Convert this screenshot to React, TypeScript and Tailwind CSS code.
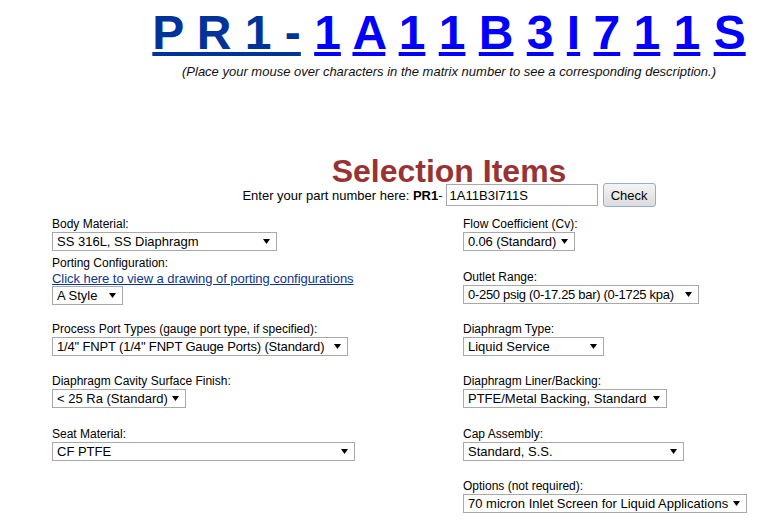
const FONT = { fontFamily: '"Liberation Sans", Arial, sans-serif' };

const matrix = ["1", "A", "1", "1", "B", "3", "I", "7", "1", "1", "S"];

function Arrow() {
  return (
    <svg width="7" height="5" viewBox="0 0 7 5" className="ml-[4px] shrink-0">
      <polygon points="0,0 7,0 3.5,5" fill="#000" />
    </svg>
  );
}

function FakeSelect({ value, width, tight = "" }: { value: string; width: string; tight?: string }) {
  return (
    <div
      className={`flex h-[19px] items-center justify-between border border-[#a9a9a9] bg-white pl-[4px] pr-[6px] text-[13px] leading-[15px] text-black ${width}`}
    >
      <span className={`whitespace-nowrap ${tight}`}>{value}</span>
      <Arrow />
    </div>
  );
}

function Label({ text, className = "" }: { text: string; className?: string }) {
  return <div className={`text-[12px] leading-[15px] text-black ${className}`}>{text}</div>;
}

export default function App() {
  return (
    <div className="h-[521px] w-full overflow-hidden bg-white text-black" style={FONT}>
      {/* header + title, centred on x=449 */}
      <div className="pl-[139px] text-center">
        <div className="whitespace-nowrap pt-[5px] text-[48px] font-bold leading-[55px]">
          <a className="text-[#003399] underline">P R 1 -</a>
          {matrix.map((c, i) => (
            <span key={i}>
              {" "}
              <a className="text-[#0000ff] underline">{c}</a>
            </span>
          ))}
        </div>
        <div className="mt-[4px] whitespace-nowrap text-[13px] italic leading-[15px] text-[#111]">
          (Place your mouse over characters in the matrix number to see a corresponding description.)
        </div>
        <div className="mt-[82px] text-[32px] font-bold leading-[21px] text-[#993333]">
          Selection Items
        </div>
        <div className="mt-[1px] flex h-[24px] items-center justify-center whitespace-nowrap text-[13px] leading-[15px]">
          <span>Enter your part number here:&nbsp;</span>
          <b>PR1</b>
          <span>-</span>
          <input
            readOnly
            value="1A11B3I711S"
            className="ml-[3px] h-[22px] w-[152px] border border-[#a9a9a9] bg-white px-[3px] text-[13px] text-black outline-none"
            style={FONT}
          />
          <button
            className="ml-[5px] h-[24px] w-[53px] rounded-[3px] border border-[#8fb0d8] bg-gradient-to-b from-[#f4f4f4] to-[#dcdcdc] text-[13px] text-black"
            style={FONT}
          >
            Check
          </button>
        </div>
      </div>

      {/* form columns */}
      <div className="mt-[10px] flex pl-[52px]">
        <div className="flex w-[411px] flex-col items-start">
          <Label text="Body Material:" />
          <FakeSelect value="SS 316L, SS Diaphragm" width="w-[225px]" />
          <Label text="Porting Configuration:" className="mt-[5px]" />
          <a className="text-[13px] leading-[15px] tracking-[-0.05px] text-[#0d3590] underline">
            Click here to view a drawing of porting configurations
          </a>
          <FakeSelect value="A Style" width="w-[71px]" />
          <Label text="Process Port Types (gauge port type, if specified):" className="mt-[17px]" />
          <FakeSelect
            value={'1/4" FNPT (1/4" FNPT Gauge Ports) (Standard)'}
            width="w-[296px]"
            tight="tracking-[-0.15px]"
          />
          <Label text="Diaphragm Cavity Surface Finish:" className="mt-[18px]" />
          <FakeSelect value="< 25 Ra (Standard)" width="w-[134px]" />
          <Label text="Seat Material:" className="mt-[19px]" />
          <FakeSelect value="CF PTFE" width="w-[303px]" />
        </div>

        <div className="flex flex-col items-start">
          <Label text="Flow Coefficient (Cv):" />
          <FakeSelect value="0.06 (Standard)" width="w-[112px]" tight="tracking-[-0.15px]" />
          <Label text="Outlet Range:" className="mt-[19px]" />
          <FakeSelect
            value="0-250 psig (0-17.25 bar) (0-1725 kpa)"
            width="w-[236px]"
            tight="tracking-[-0.3px]"
          />
          <Label text="Diaphragm Type:" className="mt-[18px]" />
          <FakeSelect value="Liquid Service" width="w-[141px]" />
          <Label text="Diaphragm Liner/Backing:" className="mt-[18px]" />
          <FakeSelect value="PTFE/Metal Backing, Standard" width="w-[204px]" />
          <Label text="Cap Assembly:" className="mt-[19px]" />
          <FakeSelect value="Standard, S.S." width="w-[221px]" />
          <Label text="Options (not required):" className="mt-[18px]" />
          <FakeSelect value="70 micron Inlet Screen for Liquid Applications" width="w-[284px]" />
        </div>
      </div>
    </div>
  );
}
